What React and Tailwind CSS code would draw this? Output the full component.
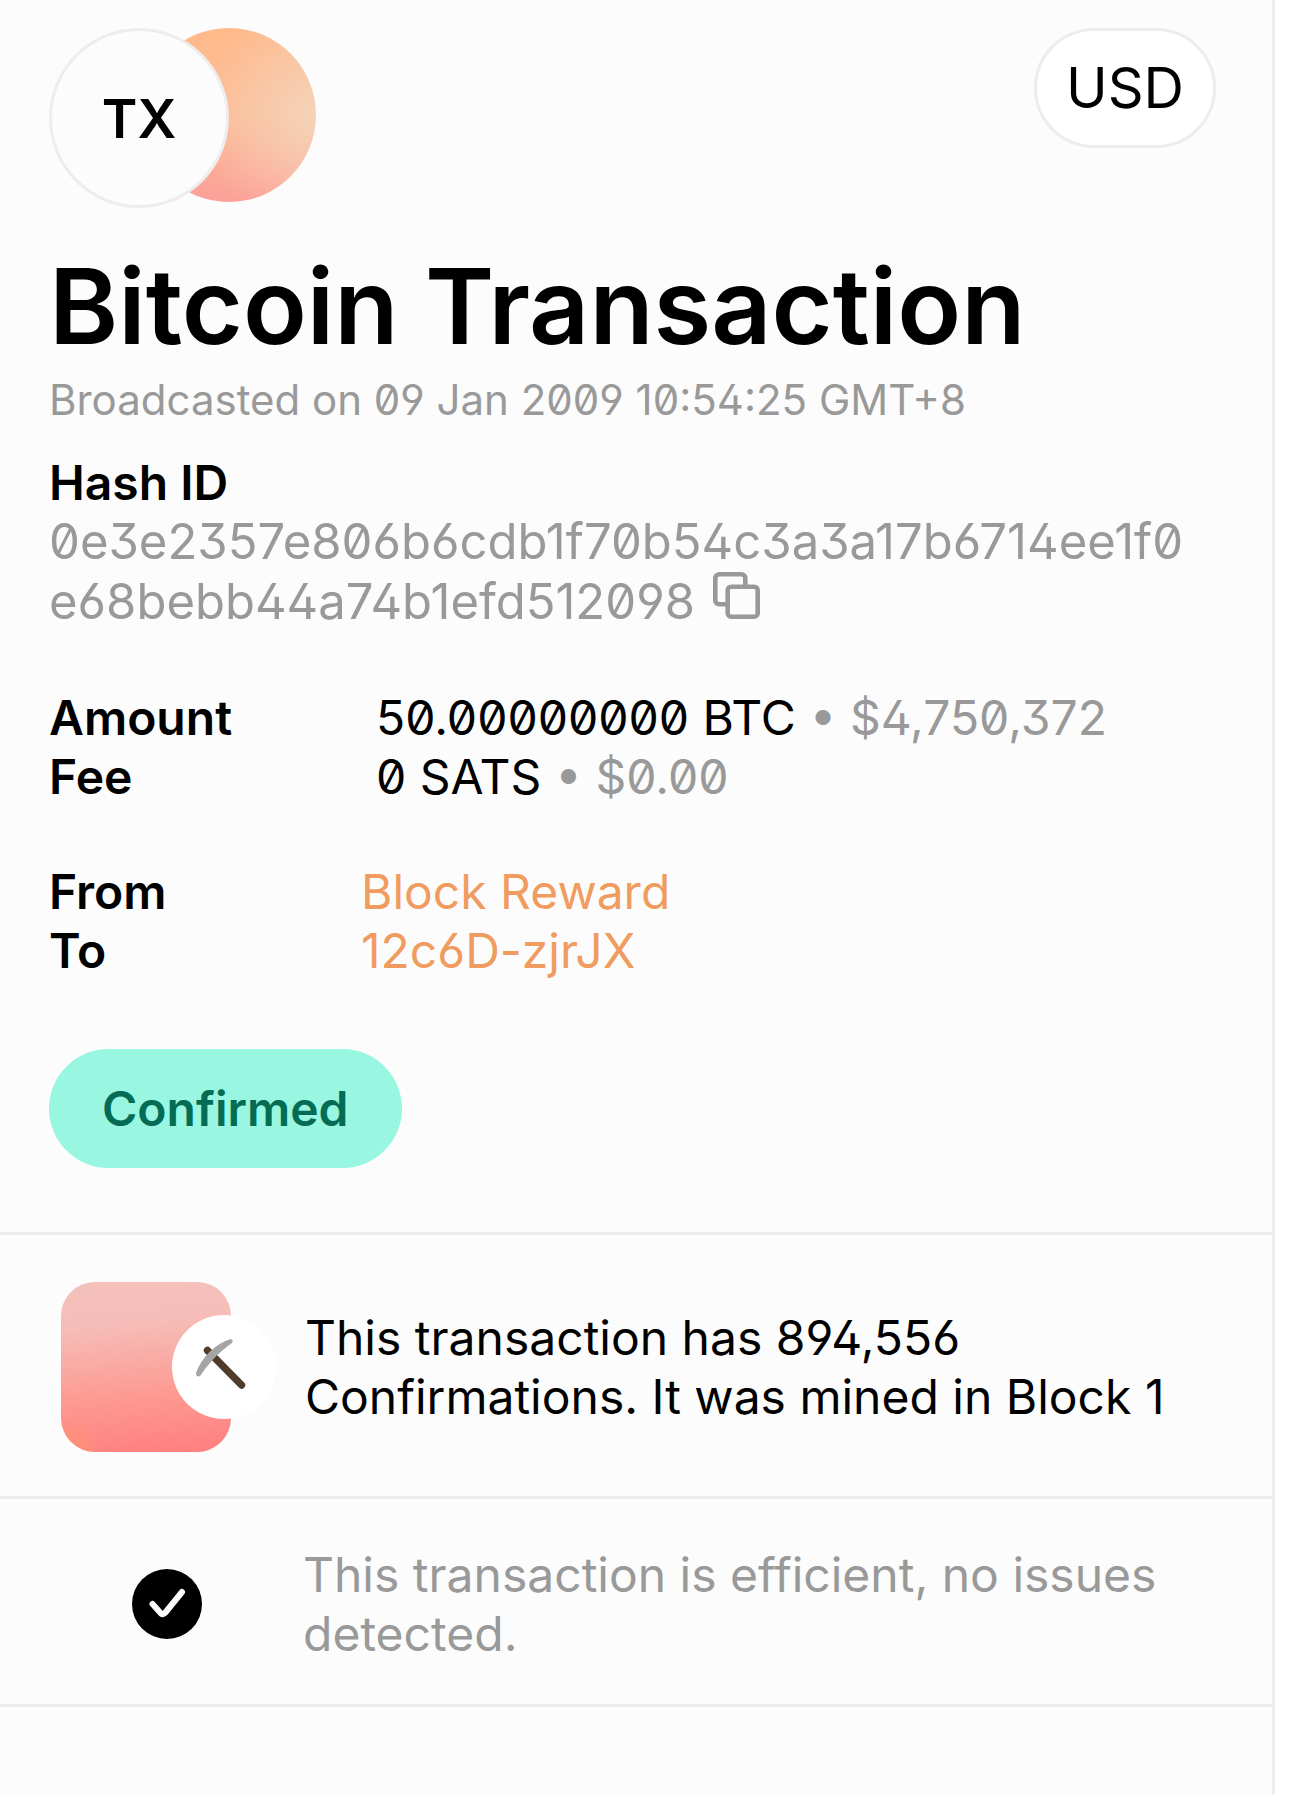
import { useState } from "react"

const details = [
    { label: "Amount", value: "50.00000000 BTC", fiat: "$4,750,372" },
    { label: "Fee", value: "0 SATS", fiat: "$0.00" },
]

const parties = [
    { label: "From", name: "Block Reward" },
    { label: "To", name: "12c6D-zjrJX" },
]

const CopyIcon = () => (
    <svg width="47" height="47" viewBox="0 0 47 47" fill="none" stroke="currentColor" strokeWidth="4.6" strokeLinejoin="round" aria-hidden="true">
        <path d="M14.700 32.300H6.300a4 4 0 0 1-4-4V6.300a4 4 0 0 1 4-4h22a4 4 0 0 1 4 4v8.400" />
        <rect x="14.700" y="14.700" width="30" height="30" rx="3.500" />
    </svg>
)

const PickaxeIcon = () => (
    <svg width="56" height="56" viewBox="0 0 56 56" fill="none" aria-hidden="true">
        <path d="M11.500 11.500L45.500 46" stroke="#503c2a" strokeWidth="7.400" strokeLinecap="round" />
        <path d="M34 0.300C20 5 6 17 0 34C-0.500 37.500 3 38.500 4.500 36.500C13 23.500 24 12.500 36 4C37.500 2 36.500 -0.500 34 0.300Z" fill="#a5a5a5" />
    </svg>
)

const CheckIcon = () => (
    <svg width="70" height="70" viewBox="0 0 70 70" fill="none" aria-hidden="true">
        <circle cx="35" cy="35" r="35" fill="#000" />
        <path d="M20.500 35L29 44.500Q31 46 33 44L50 23" stroke="#fcfcfc" strokeWidth="6" strokeLinecap="round" strokeLinejoin="round" />
    </svg>
)

const App = () => {
    const [currency, setCurrency] = useState("USD")

    return (
        <div className="min-h-screen bg-white pr-[17px] font-['Inter',sans-serif] text-[48px] leading-[59px] text-black [font-feature-settings:'zero','cv02','cv03','cv04','cv09']">
            <main className="min-h-screen border-r-3 border-[#ededed] bg-[#fcfcfc]">
                <section className="border-b-3 border-[#ededed] pt-7 pr-14 pb-16 pl-[49px]">
                    <div className="flex items-start justify-between">
                        <div className="flex items-start">
                            <div className="z-10 flex size-[180px] items-center justify-center rounded-full border-3 border-[#ededed] bg-[#fcfcfc] text-[54px] font-semibold">TX</div>
                            <div className="-ml-[87px] size-[174px] rounded-full bg-[radial-gradient(circle_at_100%_50%,#f5d3b9_0%,transparent_60%),linear-gradient(180deg,#ffb98a_0%,#fcbb94_50%,#fca099_100%)]" />
                        </div>
                        <button onClick={() => setCurrency(currency === "USD" ? "BTC" : "USD")} className="h-[120px] rounded-full border-3 border-[#ededed] bg-white px-[29px] text-[56px]">
                            {currency}
                        </button>
                    </div>

                    <h1 className="mt-9 text-[105px] leading-[123px] font-semibold">Bitcoin Transaction</h1>
                    <p className="mt-1 text-[42px] leading-[58px] text-[#999]">Broadcasted on 09 Jan 2009 10:54:25 GMT+8</p>

                    <h2 className="mt-6 font-semibold">Hash ID</h2>
                    <p className="pr-4 text-[49px] leading-[60px] break-all text-[#999]">
                        0e3e2357e806b6cdb1f70b54c3a3a17b6714ee1f0e68bebb44a74b1efd512098{" "}
                        <button aria-label="Copy hash" className="ml-1"><CopyIcon /></button>
                    </p>

                    <dl className="mt-14">
                        {details.map(row => (
                            <div key={row.label} className="flex">
                                <dt className="w-[327px] font-semibold">{row.label}</dt>
                                <dd>{row.value} <span className="text-[#999]">• {row.fiat}</span></dd>
                            </div>
                        ))}
                    </dl>

                    <dl className="mt-14">
                        {parties.map(row => (
                            <div key={row.label} className="flex">
                                <dt className="w-[312px] font-semibold">{row.label}</dt>
                                <dd><a href="#" className="text-[#f09c60]">{row.name}</a></dd>
                            </div>
                        ))}
                    </dl>

                    <div className="mt-[69px] flex h-[119px] w-fit items-center rounded-full bg-[#99f6e0] px-[53px] font-semibold text-[#046c54]">Confirmed</div>
                </section>

                <section className="flex items-center border-b-3 border-[#ededed] pt-[47px] pr-14 pb-11 pl-[61px]">
                    <div className="flex w-[244px] shrink-0 items-center">
                        <div className="size-[170px] rounded-[34px] bg-[radial-gradient(circle_at_5%_100%,#ff9470_0%,transparent_14%),linear-gradient(175deg,#f5c0bb_0%,#f6bdb8_25%,#fd968e_70%,#ff7f80_98%)]" />
                        <div className="-ml-[59px] flex size-[104px] items-center justify-center rounded-full bg-white"><PickaxeIcon /></div>
                    </div>
                    <p>This transaction has 894,556 Confirmations. It was mined in Block 1</p>
                </section>

                <section className="flex items-center border-b-3 border-[#ededed] pt-[46px] pr-14 pb-[41px] pl-[132px]">
                    <div className="w-[171px] shrink-0"><CheckIcon /></div>
                    <p className="text-[#999]">This transaction is efficient, no issues detected.</p>
                </section>
            </main>
        </div>
    )
}

export default App
